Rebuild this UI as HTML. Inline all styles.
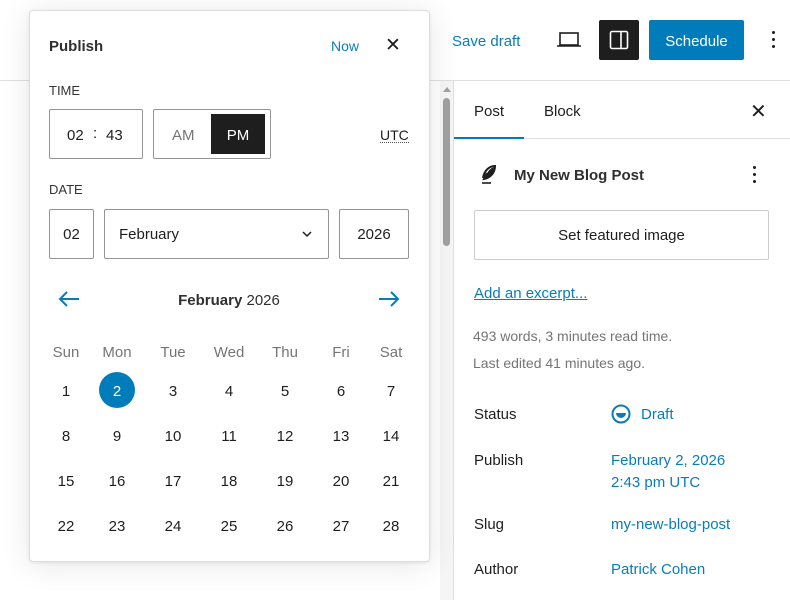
<!DOCTYPE html><html><head><style>
*{box-sizing:border-box;margin:0;padding:0}
body{width:790px;height:600px;overflow:hidden;background:#fff;font-family:"Liberation Sans",sans-serif;color:#1e1e1e;position:relative;font-size:14px}
.a{position:absolute;white-space:nowrap}
.b{position:absolute;border:1px solid #949494;border-radius:2px}
.c{transform:translateX(-50%)}
.blue{color:#0a7cb8}
</style></head><body>
<div class="a" style="left:0;top:80px;width:790px;height:1px;background:#e0e0e0"></div>
<div class="a blue" style="left:452px;top:33px;font-size:15px">Save draft</div>
<svg class="a" style="left:556px;top:30px" width="26" height="20" viewBox="0 0 26 20"><rect x="4" y="3" width="18" height="12" fill="none" stroke="#1e1e1e" stroke-width="1.6"/><line x1="1" y1="16" x2="25" y2="16" stroke="#1e1e1e" stroke-width="1.6"/></svg>
<div class="a" style="left:599px;top:20px;width:40px;height:40px;background:#1e1e1e;border-radius:2px"></div>
<svg class="a" style="left:607px;top:28px" width="24" height="24" viewBox="0 0 24 24"><rect x="3.5" y="3.5" width="17" height="17" rx="1.5" fill="none" stroke="#fff" stroke-width="1.6"/><line x1="14" y1="4" x2="14" y2="20" stroke="#fff" stroke-width="1.6"/></svg>
<div class="a" style="left:649px;top:20px;width:95px;height:40px;background:#007cba;border-radius:2px;color:#fff;font-size:15px;text-align:center;padding-top:13px">Schedule</div>
<div class="a" style="left:772px;top:31px;width:3px;height:3px;background:#1e1e1e;border-radius:50%;box-shadow:0 7px 0 #1e1e1e,0 14px 0 #1e1e1e"></div>

<div class="a" style="left:440px;top:81px;width:13px;height:519px;background:#f5f5f5"></div>
<div class="a" style="left:443px;top:98px;width:7px;height:148px;background:#a0a0a0;border-radius:4px"></div>
<div class="a" style="left:443px;top:87px;width:0;height:0;border-left:4px solid transparent;border-right:4px solid transparent;border-bottom:5px solid #a0a0a0"></div>
<div class="a" style="left:453px;top:81px;width:1px;height:519px;background:#e0e0e0"></div>
<div class="a" style="left:454px;top:138px;width:336px;height:1px;background:#e0e0e0"></div>
<div class="a" style="left:454px;top:137px;width:70px;height:2px;background:#007cba"></div>
<div class="a" style="left:474px;top:103px;font-size:15px">Post</div>
<div class="a" style="left:544px;top:103px;font-size:15px">Block</div>
<div class="a" style="left:750px;top:99px;font-size:20px">✕</div>
<svg class="a" style="left:478px;top:163px" width="22" height="24" viewBox="0 0 22 24"><path d="M5 15 C6 8 11 3 17 3 C17 10 12 15 6 16 L9 10" fill="none" stroke="#1e1e1e" stroke-width="2"/><path d="M7 15C9 8 13 5 16 4C16 10 12 14 7 15Z" fill="#1e1e1e"/><line x1="4" y1="20" x2="13" y2="20" stroke="#1e1e1e" stroke-width="1.6"/></svg>
<div class="a" style="left:514px;top:167px;font-size:15px;font-weight:bold;color:#2f2f2f">My New Blog Post</div>
<div class="a" style="left:753px;top:166px;width:3px;height:3px;background:#1e1e1e;border-radius:50%;box-shadow:0 7px 0 #1e1e1e,0 14px 0 #1e1e1e"></div>
<div class="b" style="left:474px;top:210px;width:295px;height:50px;border-color:#ccc;text-align:center;padding-top:16px;font-size:15px">Set featured image</div>
<div class="a blue" style="left:474px;top:285px;font-size:15px;text-decoration:underline">Add an excerpt...</div>
<div class="a" style="left:473px;top:328px;color:#757575;font-size:14px">493 words, 3 minutes read time.</div>
<div class="a" style="left:473px;top:355px;color:#757575;font-size:14px">Last edited 41 minutes ago.</div>
<div class="a" style="left:474px;top:406px;font-size:15px">Status</div>
<svg class="a" style="left:610px;top:403px" width="22" height="22" viewBox="0 0 22 22"><circle cx="11" cy="11" r="8.5" fill="none" stroke="#0a7cb8" stroke-width="2"/><path d="M6 10H16A5 5 0 0 1 6 10Z" fill="#0a7cb8"/></svg>
<div class="a blue" style="left:641px;top:406px;font-size:15px">Draft</div>
<div class="a" style="left:474px;top:452px;font-size:15px">Publish</div>
<div class="a blue" style="left:611px;top:450px;font-size:15px;line-height:22px">February 2, 2026<br>2:43 pm UTC</div>
<div class="a" style="left:474px;top:516px;font-size:15px">Slug</div>
<div class="a blue" style="left:611px;top:516px;font-size:15px">my-new-blog-post</div>
<div class="a" style="left:474px;top:561px;font-size:15px">Author</div>
<div class="a blue" style="left:611px;top:561px;font-size:15px">Patrick Cohen</div>

<div class="a" style="left:29px;top:10px;width:401px;height:552px;background:#fff;border:1px solid #ddd;border-radius:4px;box-shadow:0 3px 30px rgba(0,0,0,.1),0 1px 3px rgba(0,0,0,.08)"></div>
<div class="a" style="left:49px;top:38px;font-size:15px;font-weight:bold;color:#2f2f2f">Publish</div>
<div class="a blue" style="left:331px;top:38px;font-size:14px">Now</div>
<div class="a" style="left:385px;top:34px;font-size:19px">✕</div>
<div class="a" style="left:49px;top:83px;font-size:13px;color:#333">TIME</div>
<div class="b" style="left:49px;top:109px;width:94px;height:50px"></div>
<div class="a" style="left:67px;top:127px;font-size:15px">02</div>
<div class="a" style="left:93px;top:125px;font-size:15px">:</div>
<div class="a" style="left:106px;top:127px;font-size:15px">43</div>
<div class="b" style="left:153px;top:109px;width:118px;height:50px"></div>
<div class="a" style="left:172px;top:127px;font-size:15px;color:#757575">AM</div>
<div class="a" style="left:211px;top:114px;width:54px;height:40px;background:#1e1e1e;color:#fff;font-size:15px;text-align:center;padding-top:13px">PM</div>
<div class="a" style="left:380px;top:128px;font-size:14px;border-bottom:1px dotted #555;line-height:14px">UTC</div>
<div class="a" style="left:49px;top:182px;font-size:13px;color:#333">DATE</div>
<div class="b" style="left:49px;top:209px;width:45px;height:50px;text-align:center;padding-top:16px;font-size:15px">02</div>
<div class="b" style="left:104px;top:209px;width:225px;height:50px;padding-top:16px;font-size:15px;padding-left:14px">February</div>
<svg class="a" style="left:301px;top:229px" width="12" height="10" viewBox="0 0 12 10"><path d="M2 3L6 7L10 3" fill="none" stroke="#1e1e1e" stroke-width="1.5"/></svg>
<div class="b" style="left:339px;top:209px;width:70px;height:50px;text-align:center;padding-top:16px;font-size:15px">2026</div>
<svg class="a" style="left:56px;top:288px" width="26" height="22" viewBox="0 0 26 22"><path d="M23 11H4M11 4L4 11L11 18" fill="none" stroke="#0a7cb8" stroke-width="2"/></svg>
<svg class="a" style="left:376px;top:288px" width="26" height="22" viewBox="0 0 26 22"><path d="M3 11H22M15 4L22 11L15 18" fill="none" stroke="#0a7cb8" stroke-width="2"/></svg>
<div class="a c" style="left:229px;top:292px;font-size:15px;color:#2f2f2f"><b>February</b> 2026</div>
<div class="a" style="left:99px;top:372px;width:36px;height:36px;border-radius:50%;background:#007cba"></div>
<div id="cal"></div>
<script>
var cx=[66,117,173,229,285,341,391],h=["Sun","Mon","Tue","Wed","Thu","Fri","Sat"],s="";
for(var i=0;i<7;i++)s+='<div class="a c" style="left:'+cx[i]+'px;top:344px;font-size:15px;color:#757575">'+h[i]+'</div>';
var ry=[383,428,473,518];
for(var d=1;d<=28;d++){var r=Math.floor((d-1)/7),c=(d-1)%7;s+='<div class="a c" style="left:'+cx[c]+'px;top:'+ry[r]+'px;font-size:15px;color:'+(d==2?'#fff':'#1e1e1e')+'">'+d+'</div>';}
document.getElementById('cal').innerHTML=s;
</script>
</body></html>
